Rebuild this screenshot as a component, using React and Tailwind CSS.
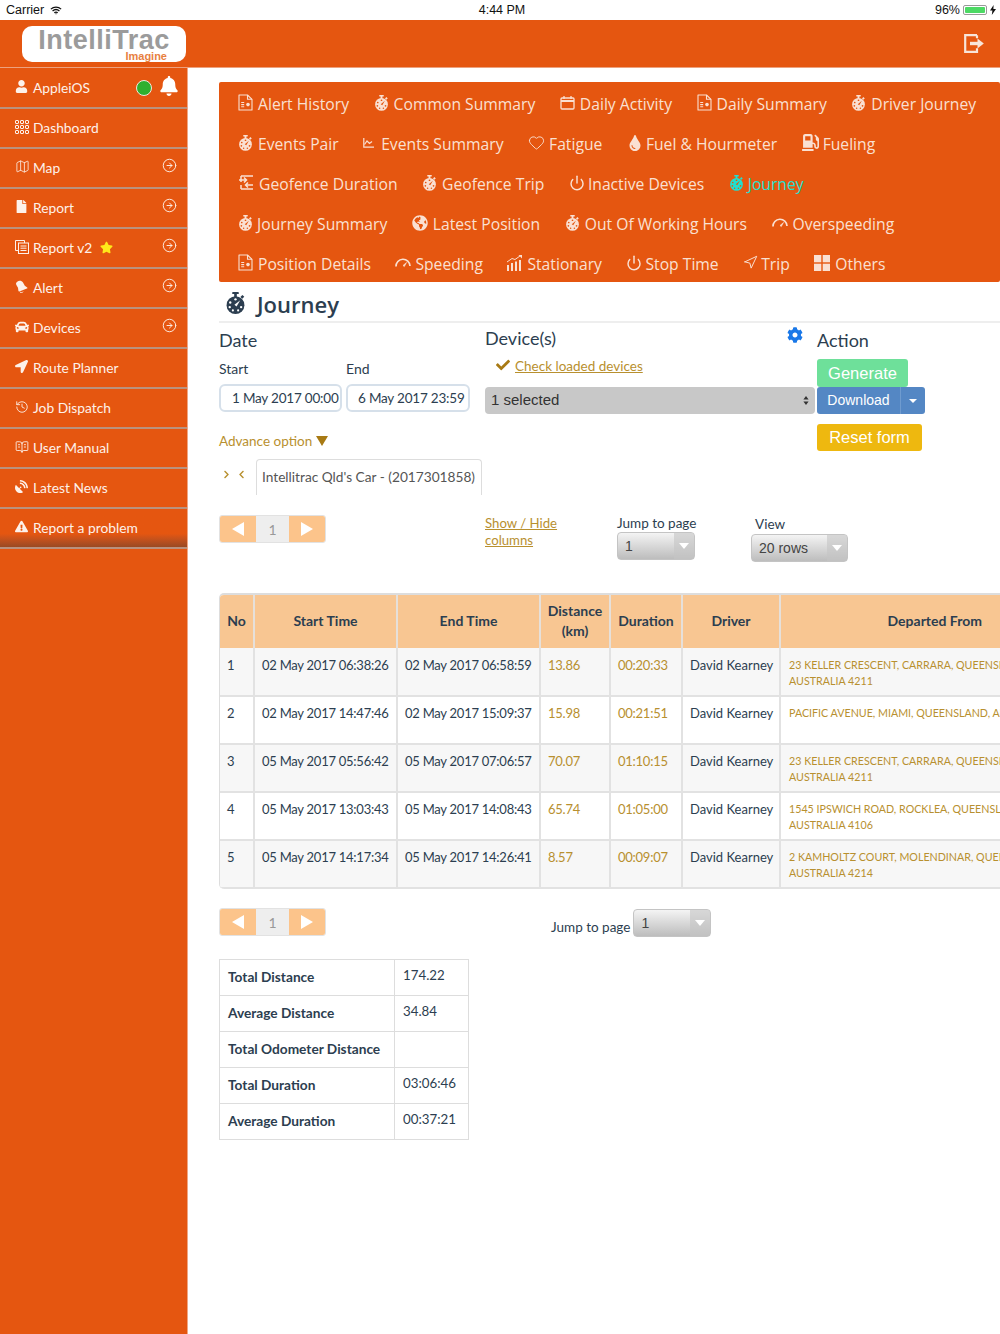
import React from 'react';
import { FaUser, FaBell, FaFile, FaCar, FaLocationArrow, FaSatelliteDish, FaExclamationTriangle, FaStar, FaCheck, FaCog, FaGlobeAmericas, FaTint, FaGasPump, FaChevronRight, FaChevronLeft } from 'react-icons/fa';
import { Map as MapIcon, History, CircleArrowRight, Heart, Power, Navigation, BookOpenText } from 'lucide-react';

const ORANGE = '#e55610';

function Stopwatch({ hole = ORANGE, className = '', size = 16 }) {
  return (
    <svg viewBox="0 0 16 17" width={size} height={size * 17 / 16} className={className} fill="currentColor">
      <rect x="5.5" y="0" width="5" height="1.6" rx=".5" />
      <rect x="7" y="1" width="2" height="3" />
      <rect x="12.2" y="2.6" width="2" height="2.2" transform="rotate(45 13.2 3.7)" />
      <circle cx="8" cy="10" r="6.8" />
      <g fill={hole}>
        <circle cx="8" cy="5.6" r=".9" />
        <circle cx="4" cy="8" r=".9" />
        <circle cx="3.6" cy="11.5" r=".9" />
        <circle cx="12.3" cy="11.5" r=".9" />
        <circle cx="6" cy="14" r=".8" />
        <circle cx="10" cy="14" r=".8" />
        <path d="M11.6 6.2 L8.8 11 L7.2 9.8 Z" />
      </g>
    </svg>
  );
}
function DocIcon() {
  return (
    <svg viewBox="0 0 15 17" width="15" height="17" fill="none" stroke="currentColor" strokeWidth="1.1">
      <path d="M1 1h8.5L14 5.3V16H1z" strokeLinejoin="round" />
      <path d="M9.5 1v4.3H14" />
      <path d="M3.2 8.5h3M3.2 10.6h3M3.2 12.7h3" />
      <circle cx="10" cy="10.6" r="1.8" fill="currentColor" stroke="none" />
    </svg>
  );
}
function CalIcon() {
  return (
    <svg viewBox="0 0 15 14" width="15" height="14" fill="none" stroke="currentColor" strokeWidth="1.3">
      <rect x="1" y="2" width="13" height="11" rx="1" />
      <path d="M1 5h13" strokeWidth="2" />
      <path d="M4 0v3M11 0v3" />
    </svg>
  );
}
function ChartSm() {
  return (
    <svg viewBox="0 0 11 10" width="11" height="10" fill="none" stroke="currentColor" strokeWidth="1.2">
      <path d="M.8 0v9.2H11" />
      <path d="M1.5 6.5L4 3l2.5 2.5L9 3.5" />
    </svg>
  );
}
function GeoIcon() {
  return (
    <svg viewBox="0 0 16 15" width="16" height="15" fill="none" stroke="currentColor" strokeWidth="1.5">
      <path d="M3 1h12M3 14h12M1 5h7M6 2.5L8.5 5 6 7.5M15 10H8M10 7.5L7.5 10l2.5 2.5M3 1v6M3 10v4" />
    </svg>
  );
}
function Gauge() {
  return (
    <svg viewBox="0 0 16 10" width="16" height="10" fill="none" stroke="currentColor">
      <path d="M1 8.5A7 7 0 0 1 15 8" strokeWidth="1.7" />
      <path d="M8 7.5L11.5 4.5 9.3 8.6z" fill="currentColor" strokeWidth=".6" />
    </svg>
  );
}
function BarsIcon() {
  return (
    <svg viewBox="0 0 15 16" width="15" height="16" fill="currentColor">
      <rect x="0" y="10" width="2" height="6" /><rect x="4" y="8" width="2" height="8" />
      <rect x="8" y="6.5" width="2" height="9.5" /><rect x="12" y="5" width="2" height="11" />
      <path d="M0 7L5 3.5 8 4.5 13 1" fill="none" stroke="currentColor" strokeWidth="1" />
      <path d="M11.5 0H15V3.5z" />
    </svg>
  );
}
function Squares() {
  return (
    <svg viewBox="0 0 16 16" width="16" height="16" fill="currentColor">
      <rect x="0" y="0" width="7.3" height="7.3" /><rect x="8.7" y="0" width="7.3" height="7.3" />
      <rect x="0" y="8.7" width="7.3" height="7.3" /><rect x="8.7" y="8.7" width="7.3" height="7.3" />
    </svg>
  );
}
function GridIcon() {
  return (
    <svg viewBox="0 0 14 14" width="14" height="14" fill="none" stroke="currentColor" strokeWidth="1">
      {[0, 5, 10].map(y => [0, 5, 10].map(x => <rect key={x + '-' + y} x={x + .5} y={y + .5} width="3" height="3" rx=".5" />))}
    </svg>
  );
}
function CopyIcon() {
  return (
    <svg viewBox="0 0 14 14" width="14" height="14" fill="none" stroke="currentColor" strokeWidth="1">
      <path d="M3 10.5H.5V.5h9V3" />
      <rect x="3.5" y="3" width="10" height="10.5" />
      <path d="M5.5 6h6M5.5 8.2h6M5.5 10.5h6" />
    </svg>
  );
}
function AlertBell() {
  return (
    <svg viewBox="0 0 13 13" width="13" height="13" fill="currentColor">
      <path d="M2.2 1.8C4 .2 6.8.6 8 2.6l1.8 3.2 2.4 1.6c.4.4.2 1-.3 1.2L4.4 11.4c-.6.2-1-.2-1-.7l-.4-2.9L1.4 5C.7 3.8 1 2.7 2.2 1.8z" />
      <path d="M5 12c1 1 2.4.8 3-.3" fill="none" stroke="currentColor" />
    </svg>
  );
}
function ExitIcon() {
  return (
    <svg viewBox="0 0 20 19" width="20" height="19" fill="none" stroke="currentColor" strokeWidth="2.2">
      <path d="M13 1.2H1.2v16.6H13v-3.5M13 1.2v3" />
      <path d="M6 9.5h8" strokeWidth="3.4" />
      <path d="M13.5 4.5L19.8 9.5l-6.3 5z" fill="currentColor" stroke="none" />
    </svg>
  );
}
function Wifi() {
  return (
    <svg viewBox="0 0 14 10" width="12" height="9" fill="none" stroke="#111" strokeWidth="1.5">
      <path d="M1 3.4c3.4-3 8.6-3 12 0M3 5.6c2.3-2 5.7-2 8 0M5 7.6c1.2-.9 2.8-.9 4 0" />
      <path d="M5.8 8.4L7 9.8l1.2-1.4z" fill="#111" stroke="none" />
    </svg>
  );
}
function Tri({ className = '' }) {
  return <span className={`inline-block w-0 h-0 border-x-[5px] border-x-transparent border-t-[6px] border-t-white ${className}`} />;
}

const tabRows = [
  [
    { w: 'w-[20px]', i: <DocIcon />, t: 'Alert History' },
    { w: 'w-[20px]', i: <Stopwatch size={15} />, t: 'Common Summary' },
    { w: 'w-[20px]', i: <CalIcon />, t: 'Daily Activity' },
    { w: 'w-[20px]', i: <DocIcon />, t: 'Daily Summary' },
    { w: 'w-[20px]', i: <Stopwatch size={15} />, t: 'Driver Journey' },
  ],
  [
    { w: 'w-[20px]', i: <Stopwatch size={15} />, t: 'Events Pair' },
    { w: 'w-[18px]', i: <ChartSm />, t: 'Events Summary' },
    { w: 'w-[21px]', i: <Heart size={17} strokeWidth={1.3} />, t: 'Fatigue' },
    { w: 'w-[19px]', i: <FaTint size={16} />, t: 'Fuel & Hourmeter' },
    { w: 'w-[21px]', i: <FaGasPump size={17} />, t: 'Fueling' },
  ],
  [
    { w: 'w-[21px]', i: <GeoIcon />, t: 'Geofence Duration' },
    { w: 'w-[20px]', i: <Stopwatch size={15} />, t: 'Geofence Trip' },
    { w: 'w-[19px]', i: <Power size={16} strokeWidth={2.2} />, t: 'Inactive Devices' },
    { w: 'w-[19px]', i: <Stopwatch size={15} />, t: 'Journey', active: true },
  ],
  [
    { w: 'w-[19px]', i: <Stopwatch size={15} />, t: 'Journey Summary' },
    { w: 'w-[21px]', i: <FaGlobeAmericas size={16} />, t: 'Latest Position' },
    { w: 'w-[20px]', i: <Stopwatch size={15} />, t: 'Out Of Working Hours' },
    { w: 'w-[21px]', i: <Gauge />, t: 'Overspeeding' },
  ],
  [
    { w: 'w-[20px]', i: <DocIcon />, t: 'Position Details' },
    { w: 'w-[20px]', i: <Gauge />, t: 'Speeding' },
    { w: 'w-[20px]', i: <BarsIcon />, t: 'Stationary' },
    { w: 'w-[19px]', i: <Power size={16} strokeWidth={2.2} />, t: 'Stop Time' },
    { w: 'w-[18px]', i: <Navigation size={15} strokeWidth={1.6} />, t: 'Trip' },
    { w: 'w-[21px]', i: <Squares />, t: 'Others' },
  ],
];

const menu = [
  { i: <GridIcon />, t: 'Dashboard' },
  { i: <MapIcon size={15} strokeWidth={1.3} />, t: 'Map', a: true },
  { i: <FaFile size={13} />, t: 'Report', a: true },
  { i: <CopyIcon />, t: 'Report v2', a: true, star: true },
  { i: <AlertBell />, t: 'Alert', a: true },
  { i: <FaCar size={14} />, t: 'Devices', a: true },
  { i: <FaLocationArrow size={13} />, t: 'Route Planner' },
  { i: <History size={14} strokeWidth={1.5} />, t: 'Job Dispatch' },
  { i: <BookOpenText size={14} strokeWidth={1.5} />, t: 'User Manual' },
  { i: <FaSatelliteDish size={13} />, t: 'Latest News' },
  { i: <FaExclamationTriangle size={13} />, t: 'Report a problem', last: true },
];

const rows = [
  ['1', '02 May 2017 06:38:26', '02 May 2017 06:58:59', '13.86', '00:20:33', '23 KELLER CRESCENT, CARRARA, QUEENSLAND,', 'AUSTRALIA 4211'],
  ['2', '02 May 2017 14:47:46', '02 May 2017 15:09:37', '15.98', '00:21:51', 'PACIFIC AVENUE, MIAMI, QUEENSLAND, AUSTRALIA', ''],
  ['3', '05 May 2017 05:56:42', '05 May 2017 07:06:57', '70.07', '01:10:15', '23 KELLER CRESCENT, CARRARA, QUEENSLAND,', 'AUSTRALIA 4211'],
  ['4', '05 May 2017 13:03:43', '05 May 2017 14:08:43', '65.74', '01:05:00', '1545 IPSWICH ROAD, ROCKLEA, QUEENSLAND,', 'AUSTRALIA 4106'],
  ['5', '05 May 2017 14:17:34', '05 May 2017 14:26:41', '8.57', '00:09:07', '2 KAMHOLTZ COURT, MOLENDINAR, QUEENSLAND,', 'AUSTRALIA 4214'],
];

const summary = [
  ['Total Distance', '174.22'],
  ['Average Distance', '34.84'],
  ['Total Odometer Distance', ''],
  ['Total Duration', '03:06:46'],
  ['Average Duration', '00:37:21'],
];

function Pager() {
  return (
    <div className="flex h-[28px] w-[107px] shrink-0 rounded-[3px] overflow-hidden border border-[#e2e2e2] text-[14px]">
      <div className="flex-1 bg-[#fcc48b] flex items-center justify-center">
        <span className="w-0 h-0 border-y-[7px] border-y-transparent border-r-[12px] border-r-white" />
      </div>
      <div className="w-[33px] bg-[#eeeeee] text-[#999] flex items-center justify-center">1</div>
      <div className="flex-1 bg-[#fcc48b] flex items-center justify-center">
        <span className="w-0 h-0 border-y-[7px] border-y-transparent border-l-[12px] border-l-white" />
      </div>
    </div>
  );
}

function GreySelect({ label, className = '' }) {
  return (
    <div className={`flex h-[28px] rounded-[4px] border border-[#c4c4c4] bg-gradient-to-b from-[#f4f4f4] to-[#bdbdbd] text-[#444] text-[14px] overflow-hidden ${className}`} style={{ fontFamily: '"Liberation Sans", sans-serif' }}>
      <div className="flex-1 pl-[7px] flex items-center">{label}</div>
      <div className="w-[20px] bg-[#c4c4c4]/60 flex items-center justify-center"><Tri /></div>
    </div>
  );
}

export default function App() {
  return (
    <div className="w-[1000px] h-[1334px] overflow-hidden bg-white text-[#2c3e50]" style={{ fontFamily: 'Lato, sans-serif' }}>
      {/* status bar */}
      <div className="h-[20px] flex items-center justify-between pl-[6px] pr-[4px] text-[12.5px] text-[#111] relative" style={{ fontFamily: '"Liberation Sans", sans-serif' }}>
        <div className="flex items-center gap-[6px]"><span>Carrier</span><Wifi /></div>
        <div className="absolute left-[4px] right-0 text-center font-medium">4:44 PM</div>
        <div className="flex items-center gap-[3px]">
          <span>96%</span>
          <span className="w-[24px] h-[10px] rounded-[2px] border border-[#999] p-[1px] flex"><span className="flex-1 bg-[#4cd964] rounded-[1px]" /></span>
          <svg viewBox="0 0 6 10" width="6" height="10" fill="#111"><path d="M3.6 0L0 5.6h2.4L1.8 10 6 4H3.4z" /></svg>
        </div>
      </div>
      {/* header */}
      <div className="h-[48px] bg-[#e55610] flex items-center justify-between pl-[22px] pr-[16px] border-b border-[#eda27f]">
        <div className="w-[164px] h-[36px] bg-white rounded-[10px] pt-[3px] text-center" style={{ fontFamily: '"Liberation Sans", sans-serif' }}>
          <div className="text-[27px] leading-[22px] font-bold text-[#9b9b9b] tracking-[0.5px]">IntelliTrac</div>
          <div className="pr-[19px] text-right text-[11px] leading-[10px] font-bold text-[#e8803f]">Imagine</div>
        </div>
        <div className="text-[#f8e4d8]"><ExitIcon /></div>
      </div>
      <div className="flex h-[1266px]">
        {/* sidebar */}
        <aside className="w-[188px] shrink-0 bg-[#e55610] text-[#fdf1ea] text-[13.8px] border-r border-[#f0a884] pt-[1px]">
          <div className="h-[40px] flex items-center pl-[15px] pr-[8px] border-b-2 border-[#b9927e]">
            <span className="w-[18px] flex -mt-[3px]"><FaUser size={13} /></span>
            <span>AppleiOS</span>
            <span className="ml-auto w-[16px] h-[16px] rounded-full bg-[#2fb02f] border-[1.5px] border-[#f0e8e0]" />
            <FaBell size={20} className="ml-[7px] -mt-[5px] text-white" />
          </div>
          {menu.map(m => (
            <div key={m.t} className={`h-[40px] flex items-center pl-[15px] pr-[10px] border-b-2 border-[#b9927e] ${m.last ? 'bg-gradient-to-b from-[#e55610] from-65% to-[#9a4a22]' : ''}`}>
              <span className="w-[18px] flex -mt-[3px]">{m.i}</span>
              <span>{m.t}</span>
              {m.star && <FaStar size={13} className="ml-[8px] -mt-[1px] text-[#ffe81a]" />}
              {m.a && <CircleArrowRight size={15} strokeWidth={1.5} className="ml-auto -mt-[5px]" />}
            </div>
          ))}
        </aside>
        {/* main */}
        <main className="flex-1 min-w-0 pl-[31px] pt-[14px]">
          <div className="w-[781px] h-[200px] bg-[#e55610] rounded-[2px] text-[#fae0d2] text-[15.7px] font-normal" style={{ fontFamily: '"Open Sans", sans-serif' }}>
            {tabRows.map((r, idx) => (
              <div key={idx} className="h-[40px] flex items-center gap-[24.5px] pl-[19px] pt-[6px]">
                {r.map(x => (
                  <div key={x.t} className={`flex items-center ${x.active ? 'text-[#1fe0d0]' : ''}`}>
                    <span className={`${x.w} shrink-0 flex -mt-[4px]`}>{x.i}</span>
                    <span>{x.t}</span>
                  </div>
                ))}
              </div>
            ))}
          </div>
          <div className="h-[41px] flex items-center border-b-2 border-[#eeeeee] pl-[6px] pt-[5px]">
            <Stopwatch hole="#ffffff" size={21} className="text-[#2c3e50] -mt-[1px]" />
            <h1 className="ml-[11px] text-[22px] text-[#2c3e50]" style={{ fontFamily: '"Open Sans", sans-serif', fontWeight: 600 }}>Journey</h1>
          </div>
          {/* form */}
          <div className="flex h-[192px]">
            <div className="w-[266px] shrink-0">
              <div className="h-[28px] mt-[3px] text-[18px] leading-[28px]">Date</div>
              <div className="flex mt-[4px] h-[22px] text-[14px] leading-[22px]">
                <span className="w-[127px]">Start</span><span>End</span>
              </div>
              <div className="flex gap-[4px] mt-[4px] text-[13.5px] tracking-[-0.2px]">
                <div className="w-[123px] h-[28px] rounded-[6px] border-2 border-[#d6e0ea] pl-[11px] leading-[24px] whitespace-nowrap overflow-hidden">1 May 2017 00:00</div>
                <div className="w-[124px] h-[28px] rounded-[6px] border-2 border-[#d6e0ea] pl-[10px] leading-[24px] whitespace-nowrap overflow-hidden">6 May 2017 23:59</div>
              </div>
              <div className="mt-[18px] h-[22px] flex items-center text-[13.5px] text-[#b8902f]">
                Advance option
                <span className="ml-[4px] w-0 h-0 border-x-[6px] border-x-transparent border-t-[10px] border-t-[#a87a14]" />
              </div>
              <div className="mt-[7px] flex">
                <div className="w-[37px] flex gap-[6px] pl-[3px] pt-[11px] text-[#b8902f] items-start">
                  <FaChevronRight size={9} /><FaChevronLeft size={9} />
                </div>
                <div className="w-[226px] h-[36px] border border-b-0 border-[#dddddd] rounded-t-[4px] pl-[5px] flex items-center text-[13.7px] text-[#555] whitespace-nowrap">Intellitrac Qld's Car - (2017301858)</div>
              </div>
            </div>
            <div className="w-[332px] shrink-0 relative">
              <div className="h-[28px] mt-[1px] text-[18px] leading-[28px]">Device(s)</div>
              <div className="mt-[2px] h-[24px] flex items-center pl-[11px] text-[13.5px] text-[#b8902f]">
                <FaCheck size={14} className="text-[#a87a14] mr-[5px] -mt-[3px]" />
                <span className="underline">Check loaded devices</span>
              </div>
              <div className="mt-[9px] w-[330px] h-[27px] bg-[#c8c8c8] rounded-[4px] flex items-center justify-between pl-[6px] pr-[6px] text-[15px] text-[#333]" style={{ fontFamily: '"Liberation Sans", sans-serif' }}>
                <span>1 selected</span>
                <svg viewBox="0 0 6 9" width="6" height="9" fill="#333"><path d="M3 0l2.6 3.4H.4zM3 9L.4 5.6h5.2z" /></svg>
              </div>
              <FaCog size={16} className="absolute right-[14px] top-[4px] text-[#1a78e8]" />
            </div>
            <div className="flex-1" style={{ fontFamily: '"Liberation Sans", sans-serif' }}>
              <div className="h-[28px] mt-[3px] text-[18px] leading-[28px]" style={{ fontFamily: 'Lato, sans-serif' }}>Action</div>
              <div className="mt-[5px] w-[91px] h-[28px] bg-[#6ee09a] rounded-[3px] text-white text-[16.5px] flex items-center justify-center">Generate</div>
              <div className="w-[108px] h-[27px] bg-[#5487c4] rounded-[3px] text-white text-[14px] flex">
                <span className="w-[84px] flex items-center justify-center border-r border-[#6f9bcf]">Download</span>
                <span className="flex-1 flex items-center justify-center"><span className="w-0 h-0 border-x-[4px] border-x-transparent border-t-[4px] border-t-white" /></span>
              </div>
              <div className="mt-[10px] w-[105px] h-[27px] bg-[#eeb80f] rounded-[3px] text-white text-[16.5px] flex items-center justify-center">Reset form</div>
            </div>
          </div>
          {/* pager row */}
          <div className="flex h-[78px]">
            <div className="w-[266px] shrink-0"><Pager /></div>
            <div className="w-[132px] shrink-0 text-[13.2px] leading-[17px] text-[#b8902f] underline">Show / Hide<br />columns</div>
            <div className="w-[134px] shrink-0 text-[13.5px] leading-[17px]">
              <div>Jump to page</div>
              <GreySelect label="1" className="w-[78px]" />
            </div>
            <div className="text-[13.5px] leading-[19px]">
              <div className="pl-[4px]">View</div>
              <GreySelect label="20 rows" className="w-[97px]" />
            </div>
          </div>
          {/* table */}
          <div className="w-[781px] rounded-l-[5px] overflow-hidden border-t-2 border-l border-[#dddddd]">
            <table className="w-[780px] table-fixed border-collapse text-[13px]">
              <colgroup>
                <col className="w-[34px]" /><col className="w-[143px]" /><col className="w-[143px]" /><col className="w-[70px]" /><col className="w-[72px]" /><col className="w-[98px]" /><col className="w-[220px]" />
              </colgroup>
              <thead>
                <tr className="h-[53px] bg-[#f8c692] font-bold text-[14px]">
                  {['No', 'Start Time', 'End Time'].map(h => <th key={h} className="border-r-2 border-[#e6e0da] font-bold pb-[2px]">{h}</th>)}
                  <th className="border-r-2 border-[#e6e0da] font-bold leading-[20px] pb-[2px]">Distance<br />(km)</th>
                  <th className="border-r-2 border-[#e6e0da] font-bold pb-[2px]">Duration</th>
                  <th className="border-r-2 border-[#e6e0da] font-bold pb-[2px]">Driver</th>
                  <th className="font-bold text-right pr-[18px] pb-[2px]">Departed From</th>
                </tr>
              </thead>
              <tbody>
                {rows.map((r, i) => {
                  const td = `border-r-2 border-b-2 border-[#e2e2e2] align-top pl-[7px] whitespace-nowrap ${i === 0 ? 'pt-[8px]' : 'pt-[7px]'}`;
                  const num = `${td} tracking-[-0.25px]`;
                  return (
                    <tr key={r[0]} className={`h-[48px] ${i % 2 === 0 ? 'bg-[#f7f7f7]' : 'bg-white'}`}>
                      <td className={td}>{r[0]}</td>
                      <td className={num}>{r[1]}</td>
                      <td className={num}>{r[2]}</td>
                      <td className={`${num} text-[#b8902f]`}>{r[3]}</td>
                      <td className={`${num} text-[#b8902f]`}>{r[4]}</td>
                      <td className={td}>David Kearney</td>
                      <td className={`border-b-2 border-[#e2e2e2] align-top pl-[8px] whitespace-nowrap overflow-hidden text-[10.7px] leading-[16px] text-[#b8902f] ${i === 0 ? 'pt-[9px]' : 'pt-[8px]'} ${i % 2 === 1 ? 'border-r border-r-[#cccccc]' : ''}`}>{r[5]}<br />{r[6]}</td>
                    </tr>
                  );
                })}
              </tbody>
            </table>
          </div>
          {/* bottom pager */}
          <div className="mt-[19px] flex h-[29px]">
            <Pager />
            <div className="ml-[225px] pt-[9px] text-[13.5px] leading-[20px] whitespace-nowrap">Jump to page</div>
            <GreySelect label="1" className="ml-[3px] w-[78px] mt-[1px]" />
          </div>
          {/* summary */}
          <table className="mt-[22px] w-[249px] table-fixed border-collapse text-[13.7px] border border-[#dddddd]">
            <colgroup><col className="w-[175px]" /><col className="w-[74px]" /></colgroup>
            <tbody>
              {summary.map(s => (
                <tr key={s[0]} className="h-[36px] border-b border-[#dddddd]">
                  <td className="pl-[8px] font-bold border-r border-[#dddddd] whitespace-nowrap">{s[0]}</td>
                  <td className="pl-[8px] pb-[4px] text-[13.3px]">{s[1]}</td>
                </tr>
              ))}
            </tbody>
          </table>
        </main>
      </div>
    </div>
  );
}
